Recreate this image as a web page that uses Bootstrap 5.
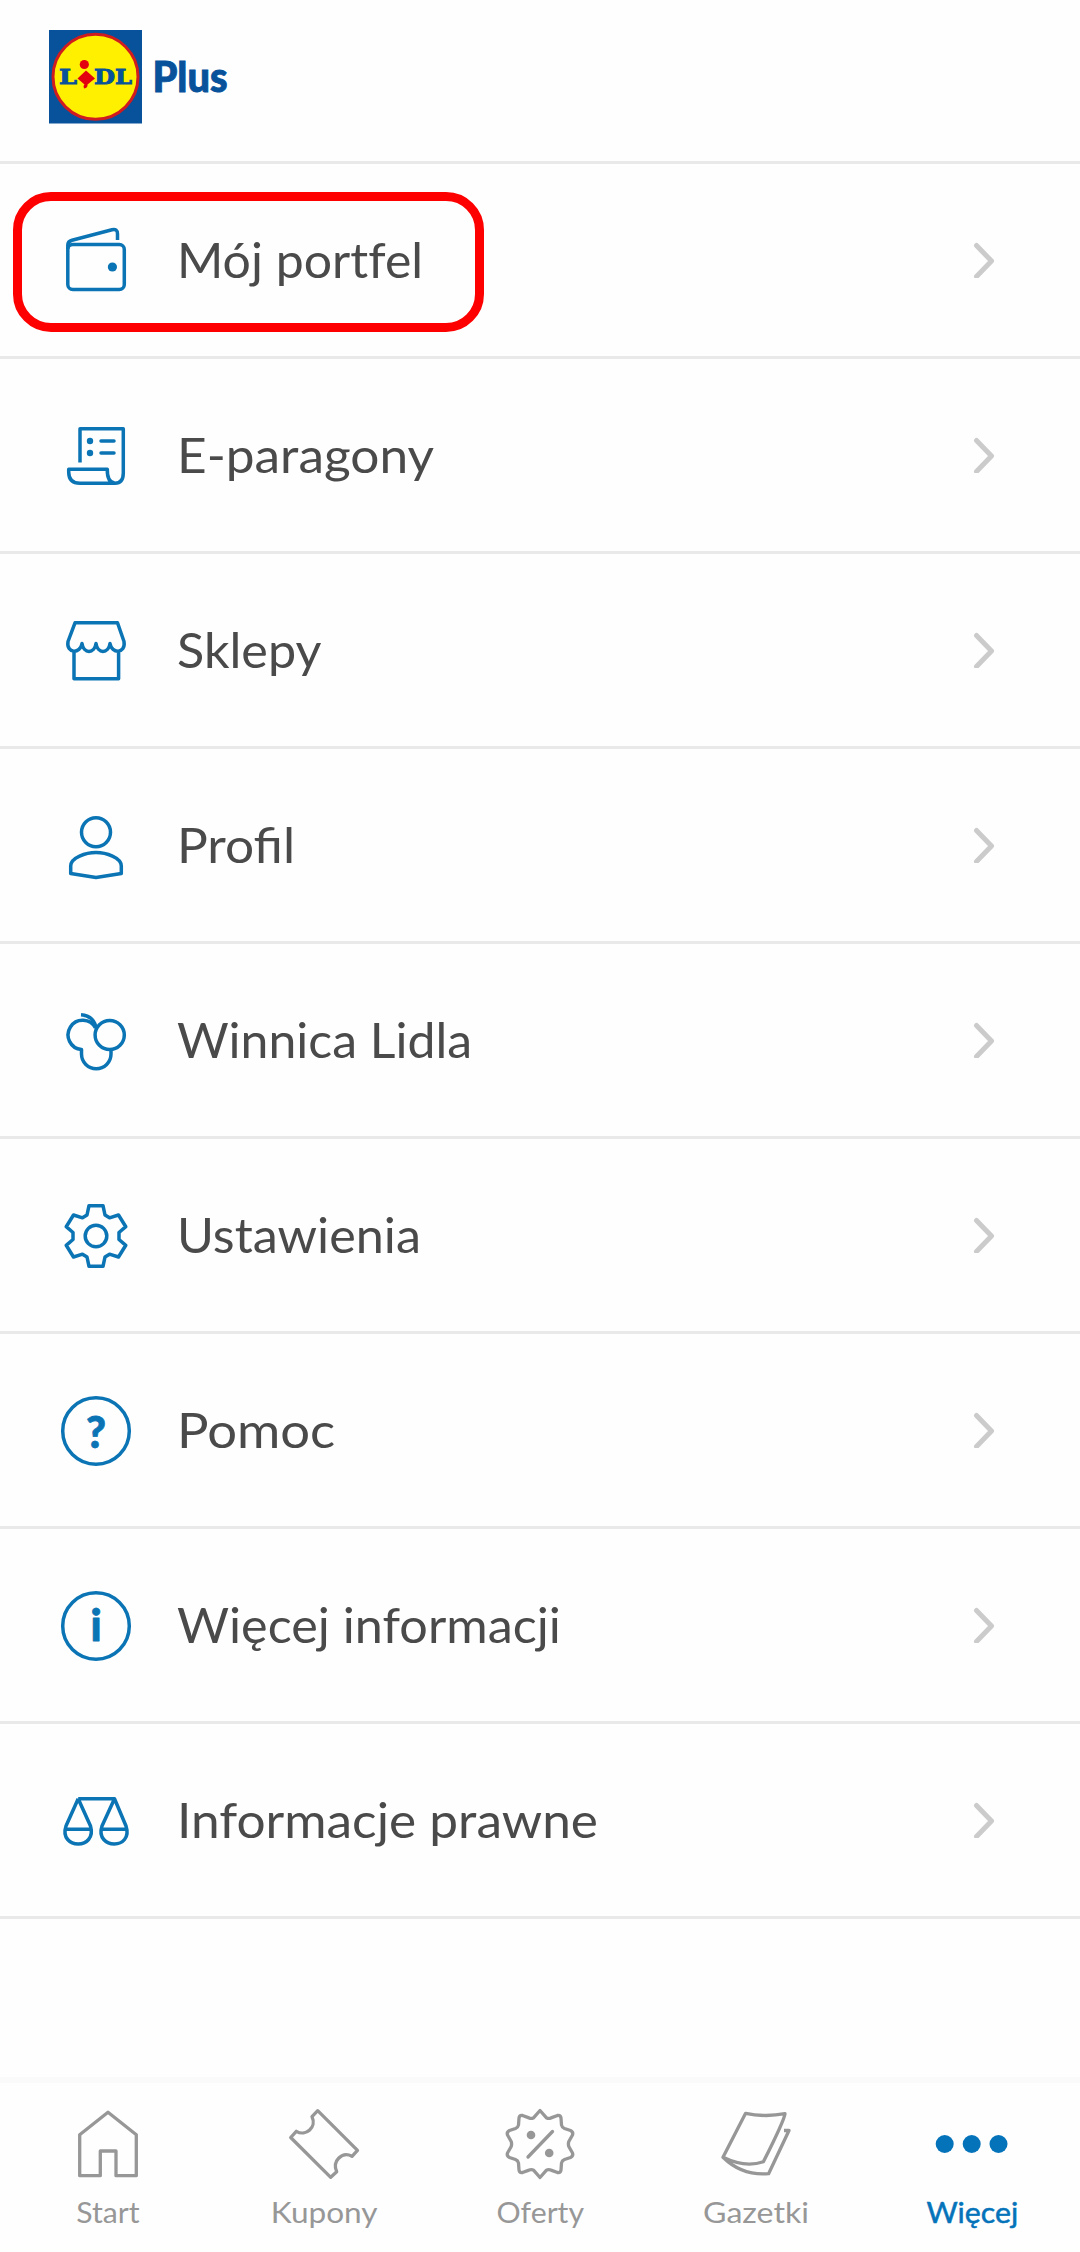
<!DOCTYPE html>
<html lang="pl">
<head>
<meta charset="utf-8">
<meta name="viewport" content="width=device-width, initial-scale=1">
<title>Lidl Plus</title>
<link href="https://cdn.jsdelivr.net/npm/bootstrap@5.3.0/dist/css/bootstrap.min.css" rel="stylesheet">
<style>
  body { background: #fefefe; font-family: Lato, "Open Sans", sans-serif; color: #4a4a4a; }
  .screen { width: 1080px; height: 2252px; overflow: hidden; }
  .topbar { height: 164px; padding: 30px 0 0 49px; border-bottom: 3px solid #e9e9e9; }
  .list-group-flush > .menu-row.list-group-item { height: 195px; padding: 0 83px 0 60px; border-width: 0 0 3px; border-color: #e9e9e9; background: transparent; color: inherit; font-size: 47.5px; line-height: 60px; }
  .menu-row .ico { color: #0b74b4; }
  .ico { width: 72px; height: 72px; flex: none; fill: none; stroke: currentColor; stroke-width: 3.5; stroke-linejoin: round; overflow: visible; }
  .ico .solid { fill: currentColor; stroke: none; }
  .ico text { fill: currentColor; stroke-width: .8; }
  .menu-label { margin-left: 45px; white-space: nowrap; }
  .chev { width: 24px; height: 36px; fill: none; stroke: #cbcbcb; stroke-width: 5; stroke-linecap: round; stroke-linejoin: round; }
  .marked { left: 13px; top: 28px; width: 471px; height: 140px; border: 9px solid #fe0000; border-radius: 38px; }
  .tabbar { height: 175px; padding-top: 25px; border-top: 6px solid #fafafa; font-size: 28.5px; line-height: 36px; color: #979797; }
  .tabbar .ico { stroke-width: 3.3; }
  .tab-label { margin-top: 14px; color: inherit; }
  .tab-on { color: #0573ba; }
  .tab-on .tab-label { -webkit-text-stroke: .5px currentColor; }
  /* widened letterforms, tuned per label */
  .wide { display: inline-block; transform-origin: left center; transform: scaleX(var(--sx, 1.06)); }
  .tab-label .wide { transform-origin: center; }
  .no-liga { font-variant-ligatures: none; }
  .sx-105 { --sx: 1.052; }
  .sx-108 { --sx: 1.082; }
  .sx-110 { --sx: 1.107; }
  .sx-113 { --sx: 1.127; }
</style>
</head>
<body>
<div class="screen d-flex flex-column">
  <header class="topbar flex-shrink-0">
    <svg width="190" height="94" viewBox="49 30 190 94" role="img" aria-label="Lidl Plus">
      <rect x="49" y="30" width="93" height="93.500" fill="#07529a"/>
      <circle cx="95.500" cy="76.800" r="42.500" fill="#fff000" stroke="#d01c1f" stroke-width="3"/>
      <g font-family="DejaVu Serif" font-weight="700" font-size="20.500" fill="#07529a" stroke="#07529a" stroke-width=".9">
        <text x="59" y="84" textLength="18" lengthAdjust="spacingAndGlyphs">L</text>
        <text x="94" y="84" textLength="38" lengthAdjust="spacingAndGlyphs">DL</text>
      </g>
      <circle cx="84.300" cy="64.500" r="4.600" fill="#e3000f"/>
      <path d="M86 70.500L95 78.500L87.500 84.500Q88 88 84 88.500L83.500 86L84.500 84.500L77.500 78.500Z" fill="#e3000f"/>
      <text x="152.500" y="91.500" font-family="Lato" font-weight="900" font-size="41.500" fill="#07529a" stroke="#07529a" stroke-width=".9" textLength="75" lengthAdjust="spacingAndGlyphs">Plus</text>
    </svg>
  </header>

  <nav class="list-group list-group-flush flex-shrink-0">
    <a class="menu-row list-group-item d-flex align-items-center position-relative">
      <span class="marked position-absolute"></span>
      <svg class="ico" viewBox="0 0 72 72"><rect x="7.800" y="20.500" width="56.500" height="45" rx="5"/><path d="M7.800 25V21Q7.800 17.300 12 16.200L52 5.800Q57.500 4.500 57.500 10V16"/><circle class="solid" cx="52.400" cy="43" r="4.600"/></svg>
      <span class="menu-label"><span class="wide sx-105 no-liga">Mój portfel</span></span>
      <svg class="chev ms-auto" viewBox="0 0 24 36"><path d="M3.500 3.500L18.500 19L3.500 34.500"/></svg>
    </a>
    <a class="menu-row list-group-item d-flex align-items-center">
      <svg class="ico" viewBox="0 0 72 72"><path d="M20 43.500V9.700H63.300V54Q63.300 64.300 55 64.300H20Q8.700 64.300 8.700 53V50.300H47.300Q47 63.500 55 64.300"/><path stroke-linecap="round" d="M41 22H54M41 34H54"/><circle class="solid" cx="30" cy="22" r="3.200"/><circle class="solid" cx="30" cy="34" r="3.200"/></svg>
      <span class="menu-label"><span class="wide sx-108">E-paragony</span></span>
      <svg class="chev ms-auto" viewBox="0 0 24 36"><path d="M3.500 3.500L18.500 19L3.500 34.500"/></svg>
    </a>
    <a class="menu-row list-group-item d-flex align-items-center">
      <svg class="ico" viewBox="0 0 72 72"><path d="M15 8.800H57.500L64 27.500C66 40 51.500 40 50 29.500C48.500 40 37.500 40 36 29.500C34.500 40 23.500 40 22 29.500C20.500 40 6 40 8 27.500ZM14 37V64.700H58.600V37"/></svg>
      <span class="menu-label"><span class="wide">Sklepy</span></span>
      <svg class="chev ms-auto" viewBox="0 0 24 36"><path d="M3.500 3.500L18.500 19L3.500 34.500"/></svg>
    </a>
    <a class="menu-row list-group-item d-flex align-items-center">
      <svg class="ico" viewBox="0 0 72 72"><circle cx="36" cy="23.300" r="14.500"/><path d="M36 43.500C46 43.500 61.300 48.500 61.300 57V64.500L36 68.500L10.700 64.500V57C10.700 48.500 26 43.500 36 43.500Z"/></svg>
      <span class="menu-label"><span class="wide sx-108">Profil</span></span>
      <svg class="chev ms-auto" viewBox="0 0 24 36"><path d="M3.500 3.500L18.500 19L3.500 34.500"/></svg>
    </a>
    <a class="menu-row list-group-item d-flex align-items-center">
      <svg class="ico" viewBox="0 0 72 72"><circle cx="49.700" cy="31" r="14.600"/><path d="M35.500 24A14.600 14.600 0 1 0 21.500 45.500V50A14.700 14.700 0 0 0 51 50V45.500M21 10.700Q33 11.500 36 23"/></svg>
      <span class="menu-label"><span class="wide sx-105">Winnica Lidla</span></span>
      <svg class="chev ms-auto" viewBox="0 0 24 36"><path d="M3.500 3.500L18.500 19L3.500 34.500"/></svg>
    </a>
    <a class="menu-row list-group-item d-flex align-items-center">
      <svg class="ico" viewBox="0 0 72 72"><circle cx="36" cy="37" r="10.800"/><path d="M29 6.700H43L45 16L49.500 18.800L58.500 16L65.800 27.700L59 33.500V40.500L65.800 46.300L58.500 58L49.500 55.200L45 58L43 67.300H29L27 58L22.500 55.200L13.500 58L6.200 46.300L13 40.500V33.500L6.200 27.700L13.500 16L22.500 18.800L27 16Z"/></svg>
      <span class="menu-label"><span class="wide">Ustawienia</span></span>
      <svg class="chev ms-auto" viewBox="0 0 24 36"><path d="M3.500 3.500L18.500 19L3.500 34.500"/></svg>
    </a>
    <a class="menu-row list-group-item d-flex align-items-center">
      <svg class="ico" viewBox="0 0 72 72"><circle cx="36" cy="37" r="33.300"/><text x="36" y="53.500" text-anchor="middle" font-weight="900" font-size="43">?</text></svg>
      <span class="menu-label"><span class="wide sx-110">Pomoc</span></span>
      <svg class="chev ms-auto" viewBox="0 0 24 36"><path d="M3.500 3.500L18.500 19L3.500 34.500"/></svg>
    </a>
    <a class="menu-row list-group-item d-flex align-items-center">
      <svg class="ico" viewBox="0 0 72 72"><circle cx="36" cy="37" r="33.300"/><text x="36" y="52" text-anchor="middle" font-weight="900" font-size="43">i</text></svg>
      <span class="menu-label"><span class="wide">Więcej informacji</span></span>
      <svg class="chev ms-auto" viewBox="0 0 24 36"><path d="M3.500 3.500L18.500 19L3.500 34.500"/></svg>
    </a>
    <a class="menu-row list-group-item d-flex align-items-center">
      <svg class="ico" viewBox="0 0 72 72"><path d="M18.200 14.700H54.500L66 42C70 54 62 60 54.300 60S38 54 42 42L54.500 14.700M18.200 14.700L30.500 42C34 54 26 60 18.200 60S2 54 6 42L18.200 14.700M5.500 45.300H31.500M41 45.300H67"/></svg>
      <span class="menu-label"><span class="wide sx-108">Informacje prawne</span></span>
      <svg class="chev ms-auto" viewBox="0 0 24 36"><path d="M3.500 3.500L18.500 19L3.500 34.500"/></svg>
    </a>
  </nav>

  <footer class="tabbar row g-0 row-cols-5 mt-auto flex-shrink-0 text-center">
    <div class="col d-flex flex-column align-items-center">
      <svg class="ico" viewBox="0 0 72 72"><path d="M36 4.300L64.300 26.700V67.700H44V43H28.300V67.700H7.700V26.700Z"/></svg>
      <div class="tab-label"><span class="wide">Start</span></div>
    </div>
    <div class="col d-flex flex-column align-items-center">
      <svg class="ico" viewBox="0 0 72 72"><path d="M29.700 2.700L69.500 42.300L64 48.300C54 43 44 53 48.700 63.700L42.700 69.300L2.700 29.500L8.300 23.300C18 29 29 19 24 8.700Z"/></svg>
      <div class="tab-label"><span class="wide sx-110">Kupony</span></div>
    </div>
    <div class="col d-flex flex-column align-items-center">
      <svg class="ico" viewBox="0 0 72 72"><path d="M36 2.500L42.500 9.800Q44.500 11 47 9.900L53.500 7.500Q56.500 7 57 10L57.500 17Q58 19.500 60.500 20.500L66.500 22.500Q69.500 24 68.500 27L64.800 33.500Q64 36 64.800 38.500L68.500 45Q69.500 48 66.500 49.500L60.500 51.500Q58 52.500 57.500 55L57 62Q56.500 65 53.500 64.500L47 62.100Q44.500 61 42.500 62.200L36 69.500L29.500 62.200Q27.500 61 25 62.100L18.500 64.500Q15.500 65 15 62L14.500 55Q14 52.500 11.500 51.500L5.500 49.500Q2.500 48 3.500 45L7.200 38.500Q8 36 7.200 33.500L3.500 27Q2.500 24 5.500 22.500L11.500 20.500Q14 19.500 14.500 17L15 10Q15.500 7 18.500 7.500L25 9.900Q27.500 11 29.500 9.800Z"/><path stroke-linecap="round" d="M48.500 23.500L24 49"/><circle class="solid" cx="27" cy="27" r="4.300"/><circle class="solid" cx="45.200" cy="45" r="4.300"/></svg>
      <div class="tab-label"><span class="wide">Oferty</span></div>
    </div>
    <div class="col d-flex flex-column align-items-center">
      <svg class="ico" viewBox="0 0 72 72"><path d="M25.600 5.300Q45 9.500 65 5.700Q64 13 43.400 53.700Q25 60 3 49.300ZM3 49.300Q22 68 48.600 65.700L69 22.500H64"/></svg>
      <div class="tab-label"><span class="wide sx-113">Gazetki</span></div>
    </div>
    <div class="col d-flex flex-column align-items-center tab-on">
      <svg class="ico" viewBox="0 0 72 72"><circle class="solid" cx="8.700" cy="36" r="9"/><circle class="solid" cx="35.700" cy="36" r="9"/><circle class="solid" cx="62.500" cy="36" r="9"/></svg>
      <div class="tab-label"><span class="wide">Więcej</span></div>
    </div>
  </footer>
</div>
<script src="https://cdn.jsdelivr.net/npm/bootstrap@5.3.0/dist/js/bootstrap.bundle.min.js"></script>
</body>
</html>
